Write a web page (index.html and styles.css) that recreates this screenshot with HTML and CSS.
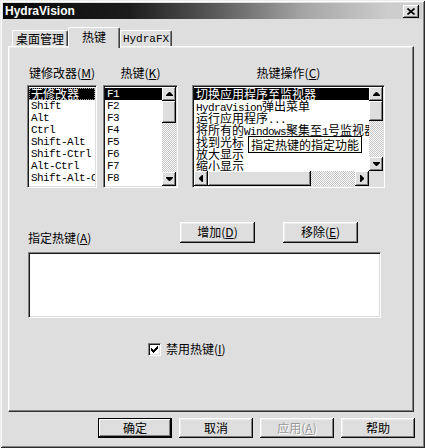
FILE: index.html
```html
<!DOCTYPE html>
<html>
<head>
<meta charset="utf-8">
<title>HydraVision</title>
<link rel="stylesheet" href="styles.css">
</head>
<body>
<div class="window">
  <div class="titlebar">
    <span class="title">HydraVision</span>
    <span class="close"><svg width="8" height="7" viewBox="0 0 8 7"><path d="M0.5 0.5L7.5 6.5M7.5 0.5L0.5 6.5" stroke="#000" stroke-width="1.6"/></svg></span>
  </div>
  <div class="content">
    <div class="tabs">
      <div class="tab tab-desk">桌面管理</div>
      <div class="tab tab-active">热键</div>
      <div class="tab tab-fx">HydraFX</div>
    </div>
    <div class="panel">
      <div class="cols">
        <div class="col col-mod">
          <div class="label">键修改器(<u>M</u>)</div>
          <div class="listbox">
            <div class="rows">
              <div class="row sel focus">无修改器</div>
              <div class="row lat">Shift</div>
              <div class="row lat">Alt</div>
              <div class="row lat">Ctrl</div>
              <div class="row lat">Shift-Alt</div>
              <div class="row lat">Shift-Ctrl</div>
              <div class="row lat">Alt-Ctrl</div>
              <div class="row lat">Shift-Alt-C</div>
            </div>
          </div>
        </div>
        <div class="col col-key">
          <div class="label">热键(<u>K</u>)</div>
          <div class="listbox listbox-flex">
            <div class="rows">
              <div class="row lat sel">F1</div>
              <div class="row lat">F2</div>
              <div class="row lat">F3</div>
              <div class="row lat">F4</div>
              <div class="row lat">F5</div>
              <div class="row lat">F6</div>
              <div class="row lat">F7</div>
              <div class="row lat">F8</div>
            </div>
            <div class="vscroll">
              <div class="sbtn"><svg width="7" height="4" viewBox="0 0 7 4"><path d="M3 0h1l3 3v1H0V3z"/></svg></div>
              <div class="thumb thumb-key"></div>
              <div class="track"></div>
              <div class="sbtn"><svg width="7" height="4" viewBox="0 0 7 4"><path d="M0 0h7v1L4 4H3L0 1z"/></svg></div>
            </div>
          </div>
        </div>
        <div class="col col-act">
          <div class="label">热键操作(<u>C</u>)</div>
          <div class="listbox listbox-grid">
            <div class="rows">
              <div class="row sel">切换应用程序至监视器</div>
              <div class="row"><span class="lat">HydraVision</span>弹出菜单</div>
              <div class="row">运行应用程序<span class="lat">...</span></div>
              <div class="row">将所有的<span class="lat">Windows</span>聚集至<span class="lat">1</span>号监视器</div>
              <div class="row">找到光标</div>
              <div class="row">放大显示</div>
              <div class="row">缩小显示</div>
            </div>
            <div class="vscroll">
              <div class="sbtn"><svg width="7" height="4" viewBox="0 0 7 4"><path d="M3 0h1l3 3v1H0V3z"/></svg></div>
              <div class="thumb thumb-act"></div>
              <div class="track"></div>
              <div class="sbtn"><svg width="7" height="4" viewBox="0 0 7 4"><path d="M0 0h7v1L4 4H3L0 1z"/></svg></div>
            </div>
            <div class="hscroll">
              <div class="sbtn"><svg width="4" height="7" viewBox="0 0 4 7"><path d="M0 3v1l3 3h1V0H3z"/></svg></div>
              <div class="hthumb"></div>
              <div class="track"></div>
              <div class="sbtn"><svg width="4" height="7" viewBox="0 0 4 7"><path d="M0 0v7h1l3-3V3L1 0z"/></svg></div>
            </div>
            <div class="corner"></div>
            <div class="tooltip">指定热键的指定功能</div>
          </div>
        </div>
      </div>
      <div class="mid">
        <div class="mid-label">指定热键(<u>A</u>)</div>
        <div class="btn btn-add">增加(<u>D</u>)</div>
        <div class="btn btn-del">移除(<u>E</u>)</div>
      </div>
      <div class="textbox"></div>
      <div class="check-row">
        <span class="checkbox"><svg width="7" height="7" viewBox="0 0 7 7"><path d="M0 2h1v1h1v1h1V3h1V2h1V1h1V0h1v3H6v1H5v1H4v1H3v1H2V6H1V5H0z"/></svg></span>
        <span class="check-label">禁用热键(<u>I</u>)</span>
      </div>
    </div>
    <div class="footer">
      <div class="btn btn-default">确定</div>
      <div class="btn">取消</div>
      <div class="btn btn-disabled">应用(<u>A</u>)</div>
      <div class="btn">帮助</div>
    </div>
  </div>
</div>
</body>
</html>
```

FILE: styles.css
```css
* { box-sizing: border-box; }
body {
  margin: 0;
  background: #dedede;
}
.window {
  width: 425px;
  height: 448px;
  padding: 3px;
  background: #dedede;
  box-shadow: inset 1px 1px #ececec, inset -1px -1px #2a2a2a, inset 2px 2px #fff, inset -2px -2px #858585;
  font-family: "Noto Sans CJK SC", sans-serif;
  font-size: 12px;
  color: #000;
  display: flex;
  flex-direction: column;
}
u { text-decoration: underline; }

/* title bar */
.titlebar {
  height: 16px;
  display: flex;
  align-items: center;
  justify-content: space-between;
  padding: 0 3px 0 2px;
  background: linear-gradient(90deg, #080808 0%, #1c1c1c 30%, #585858 50%, #a6a6a6 72%, #cdcdcd 92%);
}
.title {
  color: #fff;
  font: bold 12px "Liberation Sans", sans-serif;
}
.close {
  width: 16px;
  height: 13px;
  background: #dedede;
  box-shadow: inset -1px -1px #000, inset 1px 1px #fff, inset -2px -2px #808080;
  display: flex;
  align-items: center;
  justify-content: center;
}

.content {
  flex: none;
  display: flex;
  flex-direction: column;
  padding: 0 8px 0 5px;
}

/* tabs */
.tabs {
  height: 27px;
  display: flex;
  align-items: flex-end;
  padding-left: 4px;
}
.tab {
  height: 16px;
  line-height: 15px;
  border-top: 1px solid #fff;
  border-left: 1px solid #fff;
  border-right: 1px solid #404040;
  border-radius: 2px 2px 0 0;
  box-shadow: inset -1px 0 #808080;
  text-align: center;
  white-space: nowrap;
}
.tab-desk { width: 56px; }
.tab-active {
  width: 52px;
  height: 21px;
  line-height: 17px;
  margin-bottom: -2px;
  position: relative;
  z-index: 1;
  background: #dedede;
}
.tab-fx {
  width: 52px;
  font: 11px "Liberation Mono", monospace;
  line-height: 16px;
}

/* panel */
.panel {
  height: 366px;
  padding: 19px 0 0 18px;
  border-top: 1px solid #fff;
  border-left: 1px solid #fff;
  border-right: 1px solid #303030;
  border-bottom: 1px solid #303030;
  box-shadow: inset -1px -1px #808080, inset 1px 1px #ececec;
}
.cols { display: flex; }
.col-mod { width: 70px; }
.col-key { width: 75px; margin-left: 6px; }
.col-act { width: 193px; margin-left: 14px; }
.label {
  height: 14px;
  line-height: 14px;
  margin-bottom: 5px;
  display: flex;
  justify-content: center;
  white-space: nowrap;
}

.listbox {
  height: 103px;
  background: #fff;
  border: 1px solid;
  border-color: #808080 #fff #fff #808080;
  box-shadow: inset 1px 1px #1a1a1a, inset -1px -1px #dedede;
  padding: 1px;
  overflow: hidden;
  position: relative;
}
.listbox-flex { display: flex; }
.listbox-grid {
  display: grid;
  grid-template-columns: 1fr 14px;
  grid-template-rows: 84px 15px;
}
.rows {
  flex: 1;
  min-width: 0;
  overflow: hidden;
  padding-top: 1px;
  font-family: "Noto Sans CJK SC", sans-serif;
  font-size: 12px;
}
.row {
  height: 12px;
  line-height: 12px;
  padding-left: 2px;
  white-space: nowrap;
}
.lat {
  font-family: "Liberation Mono", monospace;
  font-size: 11px;
  letter-spacing: -0.6px;
}
.sel {
  background: #000;
  color: #fff;
}
.focus {
  outline: 1px dotted #9a9a9a;
  outline-offset: -1px;
}

/* scrollbars */
.vscroll {
  width: 14px;
  display: flex;
  flex-direction: column;
}
.hscroll {
  display: flex;
  height: 15px;
}
.sbtn {
  width: 14px;
  height: 14px;
  flex: none;
  background: #dedede;
  box-shadow: inset -1px -1px #000, inset 1px 1px #fff, inset -2px -2px #808080;
  display: flex;
  align-items: center;
  justify-content: center;
}
.hscroll .sbtn { height: 15px; }
.thumb {
  flex: none;
  background: #dedede;
  box-shadow: inset -1px -1px #000, inset 1px 1px #fff, inset -2px -2px #808080;
}
.thumb-key { height: 22px; }
.thumb-act { height: 20px; }
.hthumb {
  width: 103px;
  flex: none;
  background: #dedede;
  box-shadow: inset -1px -1px #000, inset 1px 1px #fff, inset -2px -2px #808080;
}
.track {
  flex: 1;
  background: repeating-conic-gradient(#fff 0 25%, #c4c4c4 0 50%) 0 0 / 2px 2px;
}
.corner { background: #dedede; }
.tooltip {
  position: absolute;
  left: 55px;
  top: 50px;
  height: 17px;
  line-height: 15px;
  padding: 0 2px;
  background: #fffff4;
  border: 1px solid #000;
  white-space: nowrap;
}

/* middle */
.mid {
  display: flex;
  align-items: flex-end;
  height: 21px;
  margin-top: 34px;
}
.mid-label {
  width: 152px;
  margin-left: 1px;
  line-height: 14px;
  margin-bottom: -2px;
}
.btn {
  width: 74px;
  height: 20px;
  line-height: 19px;
  text-align: center;
  background: #dedede;
  box-shadow: inset -1px -1px #0a0a0a, inset 1px 1px #fff, inset -2px -2px #808080, inset 2px 2px #ececec;
}
.mid .btn { width: 75px; height: 21px; }
.btn-del { margin-left: 28px; }
.btn-default {
  border: 1px solid #000;
  line-height: 17px;
  box-shadow: inset -1px -1px #0a0a0a, inset 1px 1px #fff, inset -2px -2px #808080;
}
.btn-disabled {
  color: #9a9a9a;
  text-shadow: 1px 1px #fff;
}
.textbox {
  width: 353px;
  height: 66px;
  margin: 9px 0 0 1px;
  background: #fff;
  border: 1px solid;
  border-color: #808080 #fff #fff #808080;
  box-shadow: inset 1px 1px #1a1a1a, inset -1px -1px #dedede;
}
.check-row {
  display: flex;
  align-items: center;
  margin-top: 24px;
  padding-left: 121px;
}
.checkbox {
  width: 13px;
  height: 13px;
  background: #fff;
  border: 1px solid;
  border-color: #808080 #fff #fff #808080;
  box-shadow: inset 1px 1px #1a1a1a, inset -1px -1px #dedede;
  display: flex;
  align-items: center;
  justify-content: center;
}
.check-label { margin-left: 5px; line-height: 14px; }

/* footer */
.footer {
  display: flex;
  justify-content: flex-end;
  gap: 7px;
  margin: 6px -1px 0 0;
  height: 20px;
}
```
